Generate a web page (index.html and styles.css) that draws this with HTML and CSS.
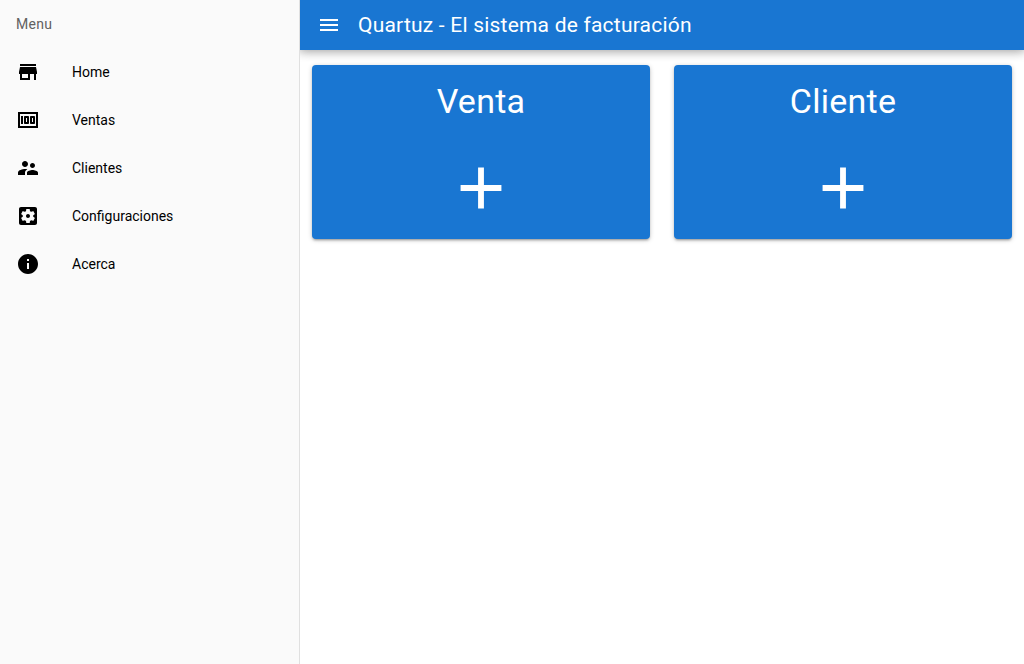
FILE: index.html
```html
<!DOCTYPE html>
<html lang="es">
<head>
<meta charset="utf-8">
<meta name="viewport" content="width=device-width, initial-scale=1">
<title>Quartuz</title>
<link rel="stylesheet" href="styles.css">
</head>
<body>
<div class="layout">
  <aside class="drawer">
    <h2 class="drawer-title">Menu</h2>
    <nav class="menu">
      <a class="menu-item" href="#home">
        <svg class="icon" viewBox="0 0 24 24" aria-hidden="true"><path d="M20 4H4v2h16V4zm1 10v-2l-1-5H4l-1 5v2h1v6h10v-6h4v6h2v-6h1zm-9 4H6v-4h6v4z"/></svg>
        <span>Home</span>
      </a>
      <a class="menu-item" href="#ventas">
        <svg class="icon" viewBox="0 0 24 24" aria-hidden="true"><path d="M15 16h3c.55 0 1-.45 1-1V9c0-.55-.45-1-1-1h-3c-.55 0-1 .45-1 1v6c0 .55.45 1 1 1zm1-6h1v4h-1v-4zm-7 6h3c.55 0 1-.45 1-1V9c0-.55-.45-1-1-1H9c-.55 0-1 .45-1 1v6c0 .55.45 1 1 1zm1-6h1v4h-1v-4zM5 8h2v8H5zM2 4v16h20V4H2zm2 14V6h16v12H4z"/></svg>
        <span>Ventas</span>
      </a>
      <a class="menu-item" href="#clientes">
        <svg class="icon" viewBox="0 0 24 24" aria-hidden="true"><path d="M16.5 12c1.38 0 2.49-1.12 2.49-2.5S17.88 7 16.5 7C15.12 7 14 8.12 14 9.5s1.12 2.5 2.5 2.5zM9 11c1.66 0 2.99-1.34 2.99-3S10.66 5 9 5C7.34 5 6 6.34 6 8s1.34 3 3 3zm7.500 3c-1.830 0-5.500.920-5.500 2.750V19h11v-2.250c0-1.830-3.670-2.750-5.500-2.750zM9 13c-2.330 0-7 1.170-7 3.500V19h7v-2.250c0-.850.330-2.340 2.370-3.470C10.500 13.100 9.660 13 9 13z"/></svg>
        <span>Clientes</span>
      </a>
      <a class="menu-item" href="#configuraciones">
        <svg class="icon" viewBox="0 0 24 24" aria-hidden="true"><path d="M12 10c-1.100 0-2 .900-2 2s.900 2 2 2 2-.900 2-2-.900-2-2-2zm7-7H5c-1.110 0-2 .900-2 2v14c0 1.100.890 2 2 2h14c1.110 0 2-.900 2-2V5c0-1.100-.890-2-2-2zm-1.750 9c0 .230-.020.460-.050.680l1.480 1.160c.130.110.170.300.080.450l-1.400 2.420c-.090.150-.270.210-.430.150l-1.740-.700c-.360.280-.760.510-1.180.690l-.260 1.850c-.030.170-.180.300-.350.300h-2.800c-.170 0-.320-.130-.350-.290l-.260-1.850c-.430-.180-.820-.410-1.180-.690l-1.740.700c-.160.060-.340 0-.430-.150l-1.400-2.420c-.090-.150-.050-.340.080-.450l1.480-1.160c-.030-.230-.050-.460-.050-.690 0-.230.020-.460.050-.680l-1.480-1.160c-.130-.110-.170-.300-.080-.450l1.400-2.420c.090-.150.270-.210.430-.150l1.740.700c.360-.280.760-.510 1.180-.690l.260-1.850c.030-.170.180-.300.350-.300h2.800c.170 0 .320.130.350.290l.260 1.850c.430.180.820.410 1.180.690l1.740-.700c.160-.060.340 0 .430.150l1.400 2.420c.090.150.050.340-.080.450l-1.480 1.160c.030.230.050.460.050.690z"/></svg>
        <span>Configuraciones</span>
      </a>
      <a class="menu-item" href="#acerca">
        <svg class="icon" viewBox="0 0 24 24" aria-hidden="true"><path d="M12 2C6.480 2 2 6.480 2 12s4.480 10 10 10 10-4.480 10-10S17.520 2 12 2zm1 15h-2v-6h2v6zm0-8h-2V7h2v2z"/></svg>
        <span>Acerca</span>
      </a>
    </nav>
  </aside>
  <div class="page">
    <header class="toolbar">
      <button class="toolbar-button" type="button" aria-label="Menu">
        <svg class="icon" viewBox="0 0 24 24" aria-hidden="true"><path d="M3 18h18v-2H3v2zm0-5h18v-2H3v2zm0-7v2h18V6H3z"/></svg>
      </button>
      <h1 class="toolbar-title">Quartuz - El sistema de facturación</h1>
    </header>
    <main class="cards">
      <a class="card" href="#nueva-venta">
        <span class="card-title">Venta</span>
        <svg class="card-icon" viewBox="0 0 24 24" aria-hidden="true"><path d="M19 13h-6v6h-2v-6H5v-2h6V5h2v6h6v2z"/></svg>
      </a>
      <a class="card" href="#nuevo-cliente">
        <span class="card-title">Cliente</span>
        <svg class="card-icon" viewBox="0 0 24 24" aria-hidden="true"><path d="M19 13h-6v6h-2v-6H5v-2h6V5h2v6h6v2z"/></svg>
      </a>
    </main>
  </div>
</div>
</body>
</html>
```

FILE: styles.css
```css
* {
  box-sizing: border-box;
}

body {
  margin: 0;
  background: #fff;
  color: #000;
  font-family: Roboto, "Liberation Sans", sans-serif;
  font-size: 14px;
  line-height: 20px;
}

.layout {
  display: flex;
  min-height: 100vh;
}

.drawer {
  flex: 0 0 300px;
  background: #fafafa;
  border-right: 1px solid #e0e0e0;
}

.drawer-title {
  margin: 0;
  padding: 14px 16px;
  color: #616161;
  font-size: 14px;
  font-weight: 400;
  letter-spacing: 0.01786em;
}

.menu-item {
  display: flex;
  align-items: center;
  gap: 32px;
  min-height: 48px;
  padding: 8px 16px;
  color: inherit;
  text-decoration: none;
}

.icon {
  display: block;
  width: 24px;
  height: 24px;
  fill: currentColor;
}

.page {
  flex: 1;
  min-width: 0;
}

.toolbar {
  display: flex;
  align-items: center;
  min-height: 50px;
  padding: 0 12px;
  background: #1976d2;
  color: #fff;
  box-shadow: 0 0 10px 2px rgba(0, 0, 0, 0.2), 0 0 10px rgba(0, 0, 0, 0.24);
  clip-path: inset(0 0 -20px 0);
}

.toolbar-button {
  display: flex;
  align-items: center;
  justify-content: center;
  width: 34px;
  height: 34px;
  padding: 0;
  border: 0;
  border-radius: 50%;
  background: transparent;
  color: inherit;
  cursor: pointer;
}

.toolbar-title {
  margin: 0;
  padding: 0 12px;
  font-size: 21px;
  font-weight: 400;
  line-height: 32px;
  letter-spacing: 0.01em;
}

.cards {
  display: grid;
  grid-template-columns: repeat(2, minmax(0, 1fr));
  gap: 24px;
  padding: 15px 12px;
}

.card {
  display: flex;
  flex-direction: column;
  align-items: center;
  gap: 32px;
  padding: 16px;
  border-radius: 4px;
  background: #1976d2;
  box-shadow: 0 1px 5px rgba(0, 0, 0, 0.2), 0 2px 2px rgba(0, 0, 0, 0.14), 0 3px 1px -2px rgba(0, 0, 0, 0.12);
  color: #fff;
  text-decoration: none;
}

.card-title {
  font-size: 34px;
  line-height: 40px;
  letter-spacing: 0.00735em;
}

.card-icon {
  display: block;
  width: 70px;
  height: 70px;
  fill: currentColor;
}
```
